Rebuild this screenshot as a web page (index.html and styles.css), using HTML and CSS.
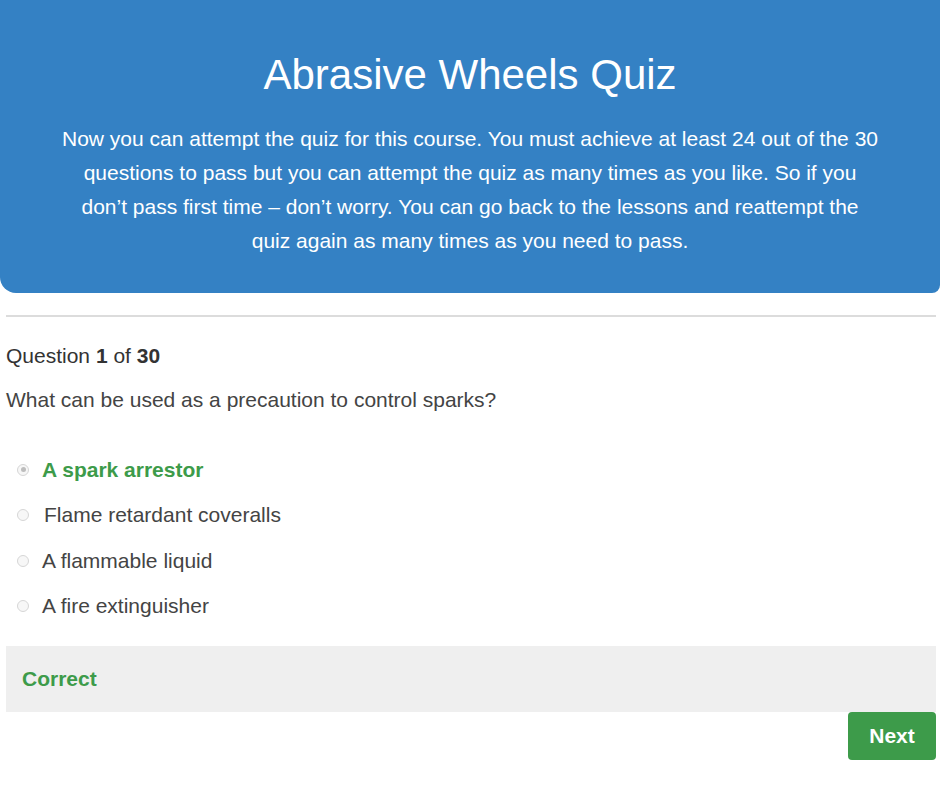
FILE: index.html
```html
<!DOCTYPE html>
<html lang="en">
<head>
  <meta charset="UTF-8" />
  <meta name="viewport" content="width=device-width, initial-scale=1.0" />
  <title>Abrasive Wheels Quiz</title>
  <link rel="stylesheet" href="styles.css">
</head>
<body>

  <header class="quiz-header">
    <h1>Abrasive Wheels Quiz</h1>
    <p>Now you can attempt the quiz for this course. You must achieve at least 24 out of the 30 questions to pass but you can attempt the quiz as many times as you like. So if you don’t pass first time – don’t worry. You can go back to the lessons and reattempt the quiz again as many times as you need to pass.</p>
  </header>

  <main class="quiz">
    <hr class="divider">

    <div class="counter">Question <b>1</b> of <b>30</b></div>
    <div class="question">What can be used as a precaution to control sparks?</div>

    <ul class="answers">
      <li class="answer correct"><span class="radio checked"></span>A spark arrestor</li>
      <li class="answer indent"><span class="radio"></span>Flame retardant coveralls</li>
      <li class="answer"><span class="radio"></span>A flammable liquid</li>
      <li class="answer"><span class="radio"></span>A fire extinguisher</li>
    </ul>

    <div class="feedback">Correct</div>

    <div class="actions">
      <button type="button" class="next">Next</button>
    </div>
  </main>

</body>
</html>
```

FILE: styles.css
```css
body {
  margin: 0;
  font-family: "Liberation Sans", Arial, sans-serif;
  color: #333;
  background: #fff;
  overflow-x: hidden;
}
.quiz-header {
  background: #3481c4;
  color: #fff;
  text-align: center;
  padding: 51px 50px 36px;
  height: 206px;
  border-radius: 0 0 8px 16px;
}
.quiz-header h1 {
  margin: 0 0 23px;
  font-size: 42px;
  font-weight: normal;
  line-height: 48px;
}
.quiz-header p {
  margin: 0 auto;
  max-width: 818px;
  font-size: 21px;
  line-height: 34px;
}
.quiz {
  padding: 0 4px 0 6px;
}
.divider {
  border: none;
  border-top: 2px solid #dcdcdc;
  margin: 22px 0 0;
}
.counter {
  margin-top: 27px;
  font-size: 21px;
  line-height: 24px;
}
.question {
  margin-top: 20px;
  font-size: 21px;
  line-height: 24px;
  color: #444;
}
.answers {
  list-style: none;
  margin: 47px 0 0;
  padding: 0;
}
.answer {
  display: flex;
  align-items: center;
  height: 45.5px;
  font-size: 21px;
  color: #444;
  margin-top: -12px;
  margin-bottom: 12px;
}
.answer.indent .radio {
  margin-right: 15px;
}
.answer.correct {
  color: #3d9b4a;
  font-weight: bold;
}
.radio {
  width: 12px;
  height: 12px;
  border: 1px solid #d6d6d6;
  border-radius: 50%;
  background: #f7f7f7;
  margin: 0 13px 0 11px;
  box-sizing: border-box;
  position: relative;
}
.radio.checked::after {
  content: "";
  position: absolute;
  left: 2.5px;
  top: 2.5px;
  width: 5px;
  height: 5px;
  border-radius: 50%;
  background: #bdbdbd;
}
.feedback {
  margin-top: 17px;
  background: #efefef;
  height: 66px;
  line-height: 66px;
  padding: 0 16px;
  font-size: 21px;
  font-weight: bold;
  color: #3d9b4a;
}
.actions {
  display: flex;
  justify-content: flex-end;
}
.next {
  width: 88px;
  height: 48px;
  background: #3d9b4a;
  color: #fff;
  border: none;
  border-radius: 4px;
  font-family: inherit;
  font-size: 21px;
  font-weight: bold;
  cursor: pointer;
}
```
